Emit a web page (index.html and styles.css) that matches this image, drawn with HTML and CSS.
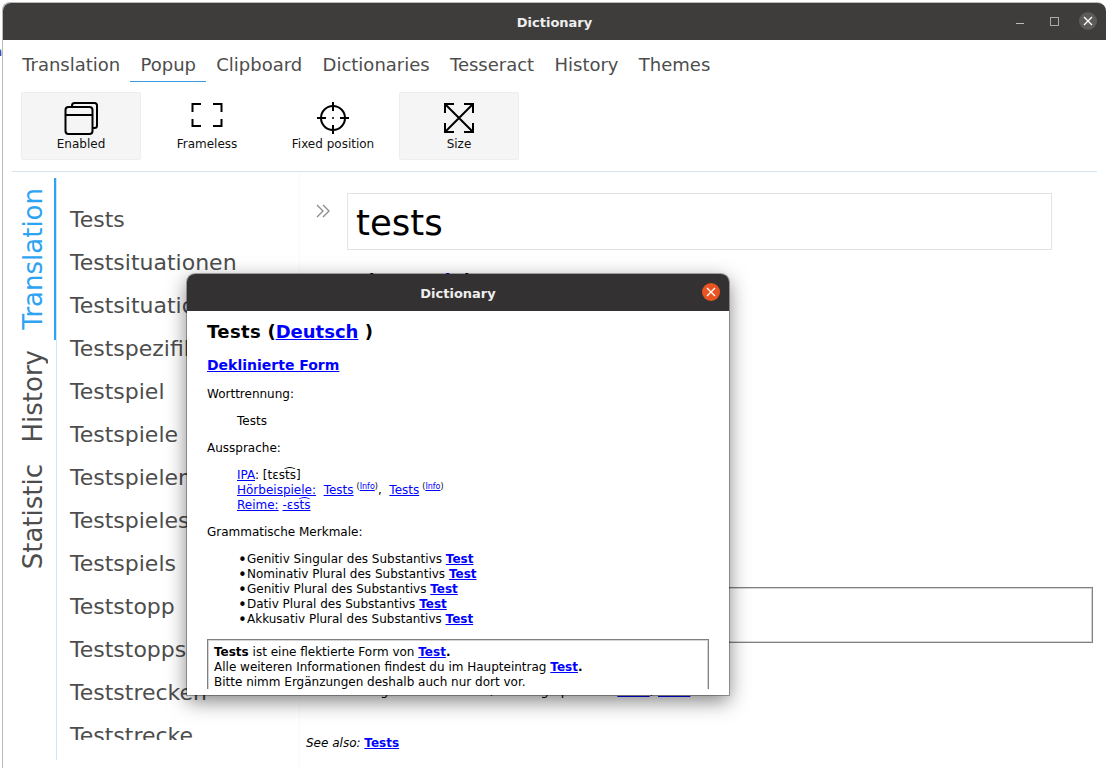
FILE: index.html
```html
<!DOCTYPE html>
<html lang="de">
<head>
  <meta charset="UTF-8" />
  <title>Dictionary</title>
  <meta name="viewport" content="width=device-width, initial-scale=1.0" />
  <link rel="stylesheet" href="styles.css">
</head>
<body>
  <span class="desktop-peek">n</span>

  <div class="window">
    <header class="titlebar">
      <span class="titlebar-name">Dictionary</span>
      <div class="win-buttons">
        <span class="win-min"></span>
        <span class="win-max"></span>
        <span class="win-close">
          <svg width="10" height="10" viewBox="0 0 10 10"><path d="M1 1l8 8M9 1l-8 8" stroke="#fff" stroke-width="1.4"/></svg>
        </span>
      </div>
    </header>

    <nav class="tabs">
      <a class="tab">Translation</a>
      <a class="tab tab-active">Popup</a>
      <a class="tab">Clipboard</a>
      <a class="tab">Dictionaries</a>
      <a class="tab">Tesseract</a>
      <a class="tab">History</a>
      <a class="tab">Themes</a>
    </nav>

    <div class="toolbar">
      <button class="tool tool-on">
        <svg width="34" height="34" viewBox="0 0 34 34" fill="none" stroke="#000" stroke-width="2"><path d="M8 6V4.500A2.500 2.500 0 0 1 10.500 2h20A2.500 2.500 0 0 1 33 4.500v20a2.500 2.500 0 0 1-2.500 2.500H29"/><rect x="1.500" y="6" width="27" height="27" rx="3"/><path d="M1.500 14h27"/></svg>
        <span>Enabled</span>
      </button>
      <button class="tool">
        <svg width="34" height="34" viewBox="0 0 34 34" fill="none" stroke="#000" stroke-width="2"><path d="M11 3H2.500v8M23 3h8.500v8M11 25H2.500v-7M23 25h8.500v-7"/></svg>
        <span>Frameless</span>
      </button>
      <button class="tool">
        <svg width="34" height="34" viewBox="0 0 34 34" fill="none" stroke="#000" stroke-width="2"><circle cx="17" cy="17" r="12"/><path d="M17 1v9M17 24v9M1 17h9M24 17h9"/><circle cx="17" cy="17" r="1" fill="#000" stroke="none"/></svg>
        <span>Fixed position</span>
      </button>
      <button class="tool tool-on">
        <svg width="34" height="34" viewBox="0 0 34 34" fill="none" stroke="#000" stroke-width="2"><path d="M4 4l26 26M30 4L4 30M3 12V3h9M22 3h9v9M3 22v9h9M22 31h9v-9"/></svg>
        <span>Size</span>
      </button>
    </div>

    <div class="content">
      <div class="side-tabs">
        <a class="side-tab side-tab-active"><span>Translation</span></a>
        <a class="side-tab"><span>History</span></a>
        <a class="side-tab"><span>Statistic</span></a>
      </div>

      <ul class="words">
        <li>Tests</li>
        <li>Testsituationen</li>
        <li>Testsituation</li>
        <li>Testspezifikation</li>
        <li>Testspiel</li>
        <li>Testspiele</li>
        <li>Testspielen</li>
        <li>Testspieles</li>
        <li>Testspiels</li>
        <li>Teststopp</li>
        <li>Teststopps</li>
        <li>Teststrecken</li>
        <li>Teststrecke</li>
      </ul>

      <main class="article">
        <div class="search-row">
          <svg class="chevrons" width="14" height="14" viewBox="0 0 14 14" fill="none" stroke="#8a8a8a" stroke-width="1.300"><path d="M1 1l6 6-6 6M7 1l6 6-6 6"/></svg>
          <div class="search-box">tests</div>
        </div>
        <h1 class="article-title"><span class="headword">Tests</span> (<a>Deutsch</a> )</h1>
        <div class="notice-box"></div>
        <p class="article-line">Die Tests ergaben nur Werte, wie folge per Link <a>Tests</a>, <a>Tests</a></p>
        <p class="see-also"><i>See also:</i> <a>Tests</a></p>
      </main>
    </div>
  </div>

  <section class="popup">
    <header class="popup-bar">
      <span>Dictionary</span>
      <span class="popup-close">
        <svg width="10" height="10" viewBox="0 0 10 10"><path d="M1 1l8 8M9 1l-8 8" stroke="#fff" stroke-width="1.400"/></svg>
      </span>
    </header>
    <div class="popup-body">
      <h1><span class="headword">Tests</span> (<a>Deutsch</a> )</h1>
      <h2><a>Deklinierte Form</a></h2>
      <p>Worttrennung:</p>
      <p class="indent">Tests</p>
      <p>Aussprache:</p>
      <p class="indent">
        <a>IPA</a>: [tɛst&#x361;s]<br>
        <a>Hörbeispiele:</a>&nbsp; <a>Tests</a><sup>(<a>Info</a>)</sup>,&nbsp; <a>Tests</a><sup>(<a>Info</a>)</sup><br>
        <a>Reime:</a> <a>-ɛst&#x361;s</a>
      </p>
      <p>Grammatische Merkmale:</p>
      <ul>
        <li>Genitiv Singular des Substantivs <a><b>Test</b></a></li>
        <li>Nominativ Plural des Substantivs <a><b>Test</b></a></li>
        <li>Genitiv Plural des Substantivs <a><b>Test</b></a></li>
        <li>Dativ Plural des Substantivs <a><b>Test</b></a></li>
        <li>Akkusativ Plural des Substantivs <a><b>Test</b></a></li>
      </ul>
      <div class="form-note">
        <b>Tests</b> ist eine flektierte Form von <a><b>Test</b></a><b>.</b><br>
        Alle weiteren Informationen findest du im Haupteintrag <a><b>Test</b></a><b>.</b><br>
        Bitte nimm Ergänzungen deshalb auch nur dort vor.
      </div>
    </div>
  </section>
</body>
</html>
```

FILE: styles.css
```css
html, body {
  margin: 0;
  height: 100%;
  overflow: hidden;
}
body {
  background: #fff;
  font-family: "DejaVu Sans", sans-serif;
  position: relative;
}
/* bit of another window showing left of the main one */
.desktop-peek {
  position: absolute;
  left: -6px;
  top: 44px;
  font-size: 13px;
  color: #1a2a8c;
}
.window {
  position: relative;
  margin: 3px 0 0 3px;
  height: 766px;
  background: #fff;
  box-shadow: -1px -1px 0 #b9b9b9;
  border-radius: 8px 8px 0 0;
  display: flex;
  flex-direction: column;
}
.titlebar {
  height: 37px;
  flex-shrink: 0;
  padding-top: 1px;
  box-sizing: border-box;
  background: #3f3d3b;
  border-radius: 8px 8px 0 0;
  color: #eee;
  font-size: 13px;
  font-weight: bold;
  display: flex;
  align-items: center;
  justify-content: center;
  position: relative;
}
.win-buttons {
  position: absolute;
  right: 9px;
  top: 9px;
  display: flex;
  align-items: center;
  gap: 20px;
}
.win-min {
  width: 8px;
  height: 1px;
  background: #bbb;
  margin: 5px 6px 0 0;
}
.win-max {
  width: 7px;
  height: 7px;
  border: 1px solid #aaa;
}
.win-close {
  width: 18px;
  height: 18px;
  border-radius: 50%;
  background: #5c5b59;
  display: flex;
  align-items: center;
  justify-content: center;
}

.tabs {
  display: flex;
  height: 42px;
  padding-left: 9px;
  flex-shrink: 0;
  box-sizing: border-box;
}
.tab {
  font-size: 18px;
  color: #4d4d4d;
  padding: 0 10.150px;
  line-height: 49px;
  height: 42px;
  box-sizing: border-box;
}
.tab-active {
  border-bottom: 1px solid #3b99e0;
}

.toolbar {
  display: flex;
  gap: 6px;
  margin: 10px 0 0 18px;
  padding-bottom: 11px;
}
.tool {
  width: 120px;
  height: 68px;
  padding: 8px 0 0;
  border: 1px solid transparent;
  border-radius: 2px;
  background: none;
  font-family: inherit;
  font-size: 12px;
  color: #111;
  display: flex;
  flex-direction: column;
  align-items: center;
  gap: 2px;
}
.tool-on {
  background: #f5f5f5;
  border-color: #eee;
}
.content {
  margin-left: 9px;
  width: 1085px;
  border-top: 1px solid #d6e4f0;
  display: flex;
  flex: 1;
  min-height: 0;
}

.side-tabs {
  width: 44px;
  margin-top: 6px;
  height: 582px;
  flex-shrink: 0;
  border-right: 1px solid #cfe6fa;
}
.side-tab {
  display: flex;
  justify-content: center;
  padding: 10px 0;
  font-size: 26px;
  line-height: 32px;
  color: #4d4d4d;
  border-right: 2px solid transparent;
}
.side-tab:last-child {
  padding-top: 12px;
}
.side-tab span {
  writing-mode: vertical-rl;
  transform: rotate(180deg);
}
.side-tab-active {
  color: #2ea3f2;
  border-right-color: #2ea3f2;
}
.words {
  list-style: none;
  margin: 26px 0 0;
  padding: 0 0 0 13px;
  width: 229px;
  height: 542px;
  overflow: hidden;
  flex-shrink: 0;
  font-size: 22px;
  color: #4d4d4d;
  white-space: nowrap;
}
.words li {
  height: 43px;
  line-height: 43px;
}

.article {
  flex: 1;
  min-width: 0;
  font-size: 13px;
  color: #000;
  padding-left: 6px;
  border-left: 1px solid #fafafa;
}
.search-row {
  display: flex;
  gap: 17px;
  margin-top: 21px;
  padding-left: 10px;
}
.chevrons {
  margin-top: 11px;
}
.search-box {
  width: 695px;
  height: 55px;
  border: 1px solid #e3e3e3;
  font-size: 35.500px;
  line-height: 57px;
  padding-left: 8px;
}
.article-title {
  font-size: 18px;
  line-height: 22px;
  margin: 20px 0 0;
}
.headword {
  letter-spacing: 0.400px;
}
.notice-box {
  height: 54px;
  width: 785px;
  border: 1px solid #808080;
  box-shadow: inset 0 0 0 1px #d4d4d4;
  margin-top: 295px;
}
.article-line {
  margin: 40px 0 0 -1px;
  white-space: nowrap;
}
.article a,
.popup a {
  color: #00f;
  text-decoration: underline;
}
.see-also {
  font-size: 12px;
  margin: 38px 0 0;
}
.see-also a {
  font-weight: bold;
}

/* popup sits on top of the main window */
.popup {
  position: absolute;
  left: 187px;
  top: 274px;
  width: 542px;
  height: 421px;
  background: #fff;
  border-radius: 8px 8px 0 0;
  box-shadow: 0 6px 20px rgba(0, 0, 0, 0.5), 0 0 0 1px rgba(0, 0, 0, 0.3);
  overflow: hidden;
  display: flex;
  flex-direction: column;
}
.popup-bar {
  height: 37px;
  flex-shrink: 0;
  padding-top: 1px;
  box-sizing: border-box;
  background: #333131;
  color: #eee;
  font-size: 13px;
  font-weight: bold;
  display: flex;
  align-items: center;
  justify-content: center;
  position: relative;
}
.popup-close {
  position: absolute;
  right: 9px;
  top: 9px;
  width: 18px;
  height: 18px;
  border-radius: 50%;
  background: #e95420;
  display: flex;
  align-items: center;
  justify-content: center;
}
.popup-body {
  flex: 1;
  min-height: 0;
  overflow: hidden;
  margin-bottom: 6px;
  padding: 10px 20px 0;
  font-size: 12px;
  line-height: 15px;
  color: #000;
}
.popup-body h1 {
  font-size: 18px;
  line-height: 22px;
  margin: 0 0 13px;
}
.popup-body h2 {
  font-size: 14px;
  line-height: 18px;
  margin: 0 0 13px;
}
.popup-body p {
  margin: 0 0 12px;
}
.popup-body .indent {
  margin-left: 30px;
}
.popup-body sup {
  font-size: 8px;
  line-height: 0;
  margin-left: 3px;
}
.popup-body ul {
  list-style: none;
  margin: 0 0 12px 40px;
  padding: 0;
}
.popup-body li::before {
  content: "•";
  display: inline-block;
  width: 9px;
  margin-left: -9px;
  font-size: 15px;
  line-height: 0;
  vertical-align: -2px;
}
.form-note {
  border: 1px solid #808080;
  box-shadow: inset 0 0 0 1px #d4d4d4;
  padding: 5px 6px;
  width: 488px;
  height: 100px;
}
```
